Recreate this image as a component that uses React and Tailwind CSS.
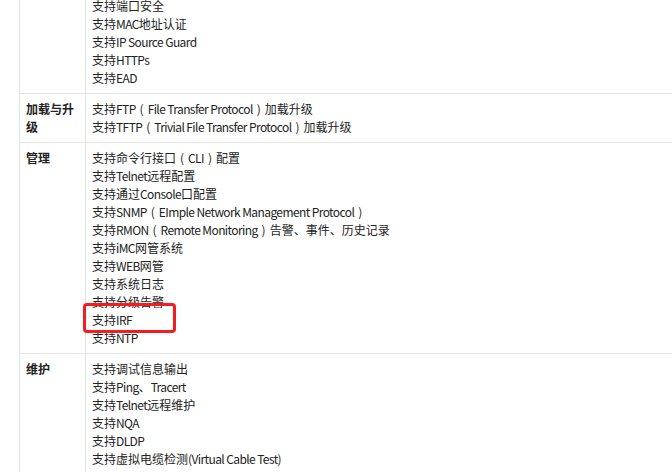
import React from "react";

const rows = [
  {
    label: "",
    items: ["支持端口安全", "支持MAC地址认证", "支持IP Source Guard", "支持HTTPs", "支持EAD"],
  },
  {
    label: "加载与升级",
    items: [
      "支持FTP（File Transfer Protocol）加载升级",
      "支持TFTP（Trivial File Transfer Protocol）加载升级",
    ],
  },
  {
    label: "管理",
    items: [
      "支持命令行接口（CLI）配置",
      "支持Telnet远程配置",
      "支持通过Console口配置",
      "支持SNMP（EImple Network Management Protocol）",
      "支持RMON（Remote Monitoring）告警、事件、历史记录",
      "支持iMC网管系统",
      "支持WEB网管",
      "支持系统日志",
      "支持分级告警",
      "支持IRF",
      "支持NTP",
    ],
  },
  {
    label: "维护",
    items: [
      "支持调试信息输出",
      "支持Ping、Tracert",
      "支持Telnet远程维护",
      "支持NQA",
      "支持DLDP",
      "支持虚拟电缆检测(Virtual Cable Test)",
    ],
  },
];

function Line({ text }) {
  const parts = text.match(/[\x20-\x7e]+|[（）]|[^\x20-\x7e（）]+/g) || [];
  return (
    <div className="whitespace-nowrap">
      {parts.map((p, k) => {
        if (p === "（" || p === "）") {
          return (
            <span key={k} className="inline-block w-[12px] text-center">
              {p === "（" ? "(" : ")"}
            </span>
          );
        }
        if (/^[\x20-\x7e]+$/.test(p)) {
          return (
            <span key={k} className="tracking-[-0.6px]">
              {p}
            </span>
          );
        }
        return <span key={k}>{p}</span>;
      })}
    </div>
  );
}

export default function App() {
  return (
    <div
      className="relative w-[672px] h-[472px] overflow-hidden bg-white text-[12px] leading-[18px] text-[#222]"
      style={{ fontFamily: '"Noto Sans CJK SC", sans-serif' }}
    >
      <div className="ml-[19px] mt-[-9px] w-[720px] border-l border-[#e3e3e3]">
        {rows.map((row, i) => (
          <div key={i} className="flex border-b border-[#e3e3e3]">
            <div className="w-[66px] shrink-0 border-r border-[#e3e3e3] py-[6px] pl-[6px] pr-[6px] font-bold">
              {row.label}
            </div>
            <div className="flex-1 py-[6px] pl-[6px]">
              {row.items.map((t, j) => (
                <Line key={j} text={t} />
              ))}
            </div>
          </div>
        ))}
      </div>
      <div className="absolute left-[83px] top-[303px] w-[93px] h-[30px] border-[3px] border-[#f41c1c] rounded-[4px]" />
    </div>
  );
}
